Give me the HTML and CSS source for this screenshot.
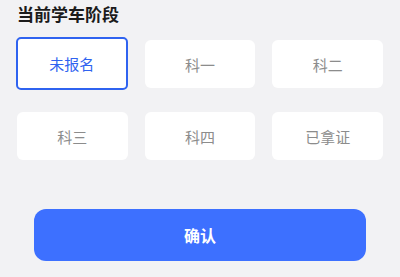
FILE: index.html
```html
<!DOCTYPE html>
<html lang="zh-CN">
<head>
<meta charset="utf-8">
<link rel="stylesheet" href="styles.css">
</head>
<body>
<div class="page">
  <div class="title">当前学车阶段</div>
  <div class="grid">
    <div class="opt selected">未报名</div>
    <div class="opt">科一</div>
    <div class="opt">科二</div>
    <div class="opt">科三</div>
    <div class="opt">科四</div>
    <div class="opt">已拿证</div>
  </div>
  <div class="confirm">确认</div>
</div>
</body>
</html>
```
FILE: styles.css
```css
html, body {
  margin: 0;
  padding: 0;
  background: #f2f2f4;
}
body {
  font-family: "Noto Sans CJK SC", "Noto Sans", sans-serif;
  width: 400px;
  height: 277px;
  overflow: hidden;
}
.page {
  padding: 2px 17px 0;
}
.title {
  font-size: 17px;
  font-weight: 700;
  line-height: 24px;
  color: #1b1b1b;
}
.grid {
  margin-top: 14px;
  display: grid;
  grid-template-columns: repeat(3, 1fr);
  column-gap: 17px;
  row-gap: 24px;
  align-items: center;
}
.opt {
  height: 48px;
  background: #ffffff;
  border-radius: 6px;
  display: flex;
  align-items: center;
  justify-content: center;
  font-size: 15px;
  color: #8c8c8c;
  box-sizing: border-box;
}
.opt.selected {
  height: 53px;
  margin: -3px 0 -2px -1px;
  border: 2px solid #2f63f0;
  border-radius: 5px;
  color: #2f63f0;
}
.confirm {
  margin: 49px 17px 0;
  height: 52px;
  border-radius: 12px;
  background: #3d70ff;
  color: #ffffff;
  font-size: 16px;
  font-weight: 700;
  display: flex;
  align-items: center;
  justify-content: center;
}
```
